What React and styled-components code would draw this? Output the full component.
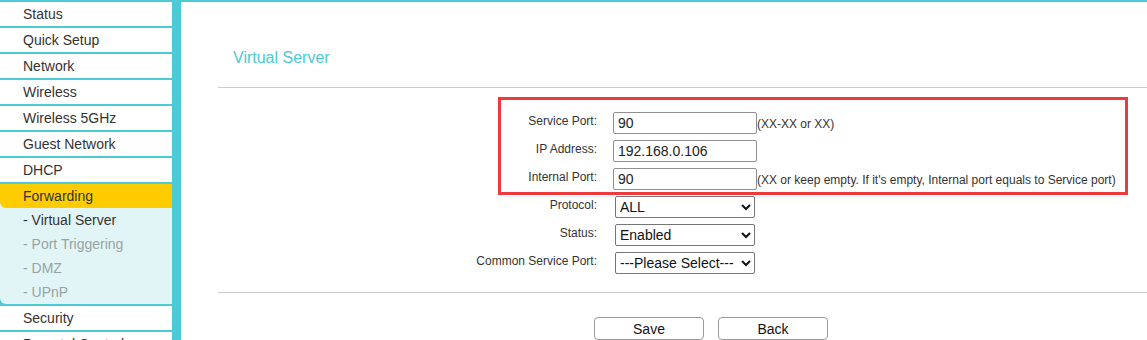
import React from "react";
import styled, { createGlobalStyle } from "styled-components";

const CYAN = "#4acbd6";

const menu = [
  "Status",
  "Quick Setup",
  "Network",
  "Wireless",
  "Wireless 5GHz",
  "Guest Network",
  "DHCP",
];

const subMenu = ["Virtual Server", "Port Triggering", "DMZ", "UPnP"];

const fields = [
  { label: "Service Port:", value: "90", hint: "(XX-XX or XX)" },
  { label: "IP Address:", value: "192.168.0.106" },
  {
    label: "Internal Port:",
    value: "90",
    hint: "(XX or keep empty. If it's empty, Internal port equals to Service port)",
  },
];

const selects = [
  { label: "Protocol:", options: ["ALL", "TCP", "UDP"] },
  { label: "Status:", options: ["Enabled", "Disabled"] },
  {
    label: "Common Service Port:",
    options: ["---Please Select---", "DNS", "FTP", "HTTP"],
  },
];

function App() {
  return (
    <>
      <GlobalStyle />
      <Page>
        <Sidebar>
          {menu.map((item) => (
            <MenuItem key={item}>{item}</MenuItem>
          ))}
          <ActiveItem>Forwarding</ActiveItem>
          <SubMenu>
            {subMenu.map((item, i) => (
              <SubItem key={item} $current={i === 0}>
                - {item}
              </SubItem>
            ))}
          </SubMenu>
          <MenuItem>Security</MenuItem>
          <MenuItem>Parental Controls</MenuItem>
        </Sidebar>

        <Main>
          <Title>Virtual Server</Title>
          <Rule />
          <FormSection>
            <FormGrid>
              {fields.map((f) => (
                <React.Fragment key={f.label}>
                  <Label>{f.label}</Label>
                  <Field>
                    <TextInput defaultValue={f.value} />
                    {f.hint && <Hint>{f.hint}</Hint>}
                  </Field>
                </React.Fragment>
              ))}
              {selects.map((s) => (
                <React.Fragment key={s.label}>
                  <Label>{s.label}</Label>
                  <Field>
                    <Select defaultValue={s.options[0]}>
                      {s.options.map((o) => (
                        <option key={o}>{o}</option>
                      ))}
                    </Select>
                  </Field>
                </React.Fragment>
              ))}
            </FormGrid>
            <Highlight />
          </FormSection>
          <Rule />
          <Actions>
            <Button>Save</Button>
            <Button>Back</Button>
          </Actions>
        </Main>
      </Page>
    </>
  );
}

const GlobalStyle = createGlobalStyle`
  html, body {
    margin: 0;
    padding: 0;
    overflow: hidden;
    background: #fff;
  }
  body {
    font-family: "Liberation Sans", Arial, sans-serif;
  }
`;

const Page = styled.div`
  display: flex;
  height: 338px;
  border-top: 2px solid ${CYAN};
  overflow: hidden;
`;

const Sidebar = styled.nav`
  width: 172px;
  flex-shrink: 0;
  border-right: 9px solid ${CYAN};
  background: ${CYAN};
  display: flex;
  flex-direction: column;
`;

const MenuItem = styled.div`
  height: 24px;
  line-height: 24px;
  padding-left: 23px;
  font-size: 14px;
  color: #333;
  background: #fff;
  border-bottom: 2px solid ${CYAN};
  flex-shrink: 0;
`;

const ActiveItem = styled(MenuItem)`
  background: #ffcc00;
  border-bottom: none;
  border-bottom-left-radius: 6px;
  box-shadow: 0 0 0 0 transparent;
  position: relative;
  z-index: 1;
`;

const SubMenu = styled.div`
  background: #e1f5f7;
  margin-top: -6px;
  padding-top: 6px;
  border-bottom-left-radius: 6px;
  margin-bottom: 2px;
  flex-shrink: 0;
`;

const SubItem = styled.div`
  height: 24px;
  line-height: 24px;
  padding-left: 23px;
  font-size: 14px;
  color: ${(p) => (p.$current ? "#333" : "#9aa3a3")};
`;

const Main = styled.main`
  flex: 1;
  padding: 46px 0 0 37px;
`;

const Title = styled.h1`
  margin: 0 0 19px 15px;
  font-size: 16px;
  line-height: 20px;
  font-weight: normal;
  color: ${CYAN};
`;

const Rule = styled.hr`
  margin: 0;
  border: none;
  border-top: 1px solid #ccc;
`;

const FormSection = styled.section`
  position: relative;
  padding: 24px 0 18px;
`;

const FormGrid = styled.div`
  display: grid;
  grid-template-columns: 379px auto;
  column-gap: 16px;
  row-gap: 6px;
`;

const Label = styled.label`
  text-align: right;
  font-size: 12px;
  line-height: 14px;
  padding-top: 2px;
  color: #333;
`;

const Field = styled.div`
  display: flex;
  align-items: center;
  height: 22px;
`;

const TextInput = styled.input`
  box-sizing: border-box;
  width: 144px;
  height: 22px;
  padding: 0 4px;
  border: 1px solid #8f8f8f;
  border-radius: 2px;
  font-family: "Liberation Sans", Arial, sans-serif;
  font-size: 14px;
  color: #222;
  outline: none;
`;

const Hint = styled.span`
  font-size: 12px;
  color: #333;
  padding-top: 2px;
`;

const Select = styled.select`
  box-sizing: border-box;
  width: 140px;
  height: 22px;
  margin-left: 2px;
  border: 1px solid #767676;
  border-radius: 2px;
  background: #fff;
  font-family: "Liberation Sans", Arial, sans-serif;
  font-size: 14px;
  color: #111;
`;

const Highlight = styled.div`
  position: absolute;
  left: 280px;
  top: 9px;
  width: 630px;
  height: 98px;
  box-sizing: border-box;
  border: 3px solid #ee3a3a;
  pointer-events: none;
`;

const Actions = styled.div`
  display: flex;
  gap: 14px;
  padding: 24px 0 0 376px;
`;

const Button = styled.button`
  box-sizing: border-box;
  width: 110px;
  height: 23px;
  border: 1px solid #9a9a9a;
  border-radius: 4px;
  background: #fff;
  font-family: "Liberation Sans", Arial, sans-serif;
  font-size: 14px;
  color: #111;
`;

export default App;
